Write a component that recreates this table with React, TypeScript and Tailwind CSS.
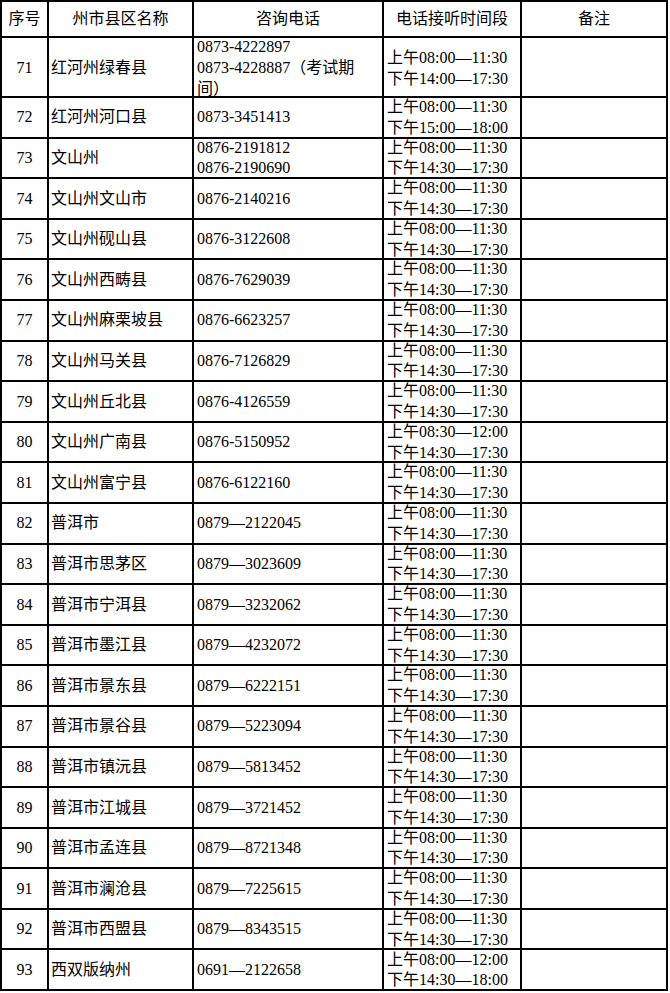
import React from 'react';

type Row = {
    no: number;
    name: string;
    phones: string[];
    times: string[];
};

const STD = ['上午08:00—11:30', '下午14:30—17:30'];

const rows: Row[] = [
    { no: 71, name: '红河州绿春县', phones: ['0873-4222897', '0873-4228887（考试期', '间）'], times: ['上午08:00—11:30', '下午14:00—17:30'] },
    { no: 72, name: '红河州河口县', phones: ['0873-3451413'], times: ['上午08:00—11:30', '下午15:00—18:00'] },
    { no: 73, name: '文山州', phones: ['0876-2191812', '0876-2190690'], times: STD },
    { no: 74, name: '文山州文山市', phones: ['0876-2140216'], times: STD },
    { no: 75, name: '文山州砚山县', phones: ['0876-3122608'], times: STD },
    { no: 76, name: '文山州西畴县', phones: ['0876-7629039'], times: STD },
    { no: 77, name: '文山州麻栗坡县', phones: ['0876-6623257'], times: STD },
    { no: 78, name: '文山州马关县', phones: ['0876-7126829'], times: STD },
    { no: 79, name: '文山州丘北县', phones: ['0876-4126559'], times: STD },
    { no: 80, name: '文山州广南县', phones: ['0876-5150952'], times: ['上午08:30—12:00', '下午14:30—17:30'] },
    { no: 81, name: '文山州富宁县', phones: ['0876-6122160'], times: STD },
    { no: 82, name: '普洱市', phones: ['0879—2122045'], times: STD },
    { no: 83, name: '普洱市思茅区', phones: ['0879—3023609'], times: STD },
    { no: 84, name: '普洱市宁洱县', phones: ['0879—3232062'], times: STD },
    { no: 85, name: '普洱市墨江县', phones: ['0879—4232072'], times: STD },
    { no: 86, name: '普洱市景东县', phones: ['0879—6222151'], times: STD },
    { no: 87, name: '普洱市景谷县', phones: ['0879—5223094'], times: STD },
    { no: 88, name: '普洱市镇沅县', phones: ['0879—5813452'], times: STD },
    { no: 89, name: '普洱市江城县', phones: ['0879—3721452'], times: STD },
    { no: 90, name: '普洱市孟连县', phones: ['0879—8721348'], times: STD },
    { no: 91, name: '普洱市澜沧县', phones: ['0879—7225615'], times: STD },
    { no: 92, name: '普洱市西盟县', phones: ['0879—8343515'], times: STD },
    { no: 93, name: '西双版纳州', phones: ['0691—2122658'], times: ['上午08:00—12:00', '下午14:30—18:00'] },
];

const cell = 'border-r-2 border-b-2 border-black flex items-center overflow-visible';

const Lines: React.FC<{ items: string[] }> = ({ items }) => (
    <div className="flex flex-col whitespace-nowrap">
        {items.map((t, i) => (
            <span key={i}>{t}</span>
        ))}
    </div>
);

export default function App() {
    return (
        <div className="bg-white min-h-[993px] text-black text-[16px] leading-[20.7px] font-['Liberation_Serif','Noto_Sans_CJK_SC',serif]">
            <div className="w-[668px] border-l-2 border-t-2 border-black">
                {/* Header */}
                <div className="flex h-[36px]">
                    <div className={`${cell} w-[47px] justify-center`}>序号</div>
                    <div className={`${cell} w-[145px] justify-center`}>州市县区名称</div>
                    <div className={`${cell} w-[190px] justify-center`}>咨询电话</div>
                    <div className={`${cell} w-[138px] justify-center`}>电话接听时间段</div>
                    <div className={`${cell} w-[146px] justify-center`}>备注</div>
                </div>

                {rows.map((r) => (
                    <div key={r.no} className={`flex ${r.no === 71 ? 'h-[60px] leading-[21px]' : 'h-[40.6px]'}`}>
                        <div className={`${cell} w-[47px] justify-center pt-[1px]`}>{r.no}</div>
                        <div className={`${cell} w-[145px] pl-[2px] pt-[1px]`}>{r.name}</div>
                        <div className={`${cell} w-[190px] pl-[3px] pt-[1px]`}>
                            <Lines items={r.phones} />
                        </div>
                        <div className={`${cell} w-[138px] pl-[3px] pt-[1px]`}>
                            <Lines items={r.times} />
                        </div>
                        <div className={`${cell} w-[146px]`}></div>
                    </div>
                ))}
            </div>
        </div>
    );
}
